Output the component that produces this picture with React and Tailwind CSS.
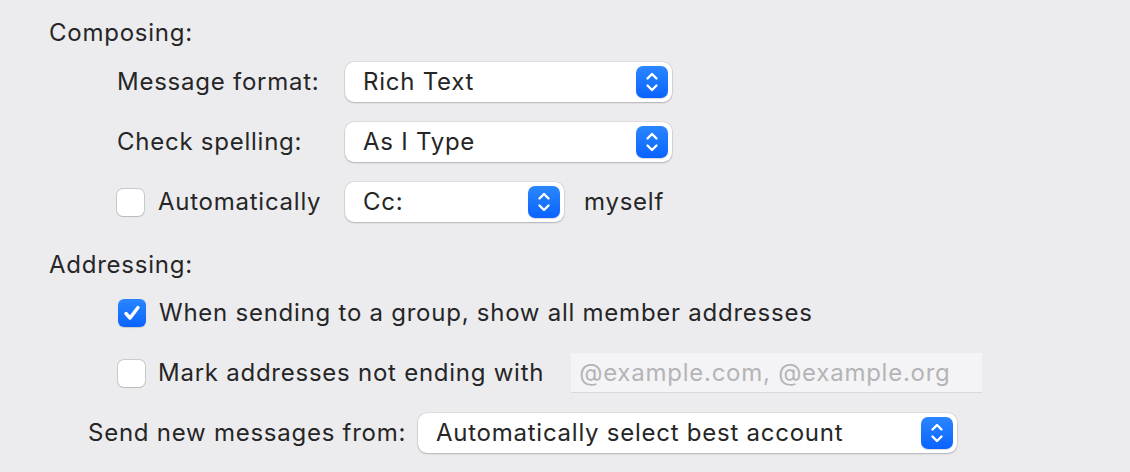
import React from "react";

const Stepper = () => (
  <span className="flex h-8 w-8 shrink-0 items-center justify-center rounded-[7px] bg-gradient-to-b from-[#2a86ff] to-[#0a62ff] shadow-[0_1px_1px_rgba(0,0,0,0.15)]">
    <svg width="14" height="22" viewBox="0 0 14 22" fill="none" stroke="white" strokeWidth="2.4" strokeLinecap="round" strokeLinejoin="round">
      <path d="M2.5 7.5 L7 3 L11.5 7.5" />
      <path d="M2.5 14.5 L7 19 L11.5 14.5" />
    </svg>
  </span>
);

const Select = ({ value, width }) => (
  <div
    className={`flex h-10 items-center justify-between rounded-[9px] bg-white pl-[18px] pr-1 shadow-[0_0_0_0.5px_rgba(0,0,0,0.12),0_1px_2px_rgba(0,0,0,0.2)] ${width}`}
  >
    <span>{value}</span>
    <Stepper />
  </div>
);

const Checkbox = ({ checked }) =>
  checked ? (
    <span className="flex h-[28px] w-[28px] shrink-0 items-center justify-center rounded-[6px] bg-gradient-to-b from-[#2a86ff] to-[#0a62ff] shadow-[0_1px_1px_rgba(0,0,0,0.15)]">
      <svg width="20" height="18" viewBox="0 0 20 18" fill="none" stroke="white" strokeWidth="3.4" strokeLinecap="round" strokeLinejoin="round">
        <path d="M4 9.5 L8 14 L16 3.5" />
      </svg>
    </span>
  ) : (
    <span className="h-[27px] w-[27px] shrink-0 rounded-[6px] bg-white shadow-[0_0_0_1px_rgba(0,0,0,0.14),0_1px_1px_rgba(0,0,0,0.08)]" />
  );

export default function App() {
  return (
    <div
      className="h-[472px] w-[1130px] bg-[#ececef] pl-[49px] pt-[18px] text-[24px] tracking-[0.75px] text-[#262626]"
      style={{ fontFamily: "Inter, 'Liberation Sans', sans-serif" }}
    >
      {/* Composing */}
      <div className="h-[30px] leading-[30px]">Composing:</div>
      <div className="mt-[14px] flex flex-col gap-5 pl-[68px]">
        <div className="flex items-center">
          <span className="w-[228px]">Message format:</span>
          <Select value="Rich Text" width="w-[327px]" />
        </div>
        <div className="flex items-center">
          <span className="w-[228px]">Check spelling:</span>
          <Select value="As I Type" width="w-[327px]" />
        </div>
        <div className="flex items-center">
          <div className="flex w-[228px] items-center gap-[14px]">
            <Checkbox />
            <span>Automatically</span>
          </div>
          <Select value="Cc:" width="w-[219px]" />
          <span className="ml-5">myself</span>
        </div>
      </div>

      {/* Addressing */}
      <div className="mt-[28px] h-[30px] leading-[30px]">Addressing:</div>
      <div className="mt-[17px] flex flex-col gap-[24px] pl-[69px]">
        <div className="flex h-8 items-center gap-[13px]">
          <Checkbox checked />
          <span>When sending to a group, show all member addresses</span>
        </div>
        <div className="flex h-10 items-center">
          <div className="flex items-center gap-[13px]">
            <Checkbox />
            <span>Mark addresses not ending with</span>
          </div>
          <div className="ml-[27px] flex h-10 w-[411px] items-center border-b border-[#d9d9dc] bg-[#f4f4f6] pl-[8px] text-[#b4b4b6]">
            @example.com, @example.org
          </div>
        </div>
      </div>
      <div className="mt-[20px] flex items-center pl-[39px]">
        <span className="w-[330px]">Send new messages from:</span>
        <Select value="Automatically select best account" width="w-[539px]" />
      </div>
    </div>
  );
}
